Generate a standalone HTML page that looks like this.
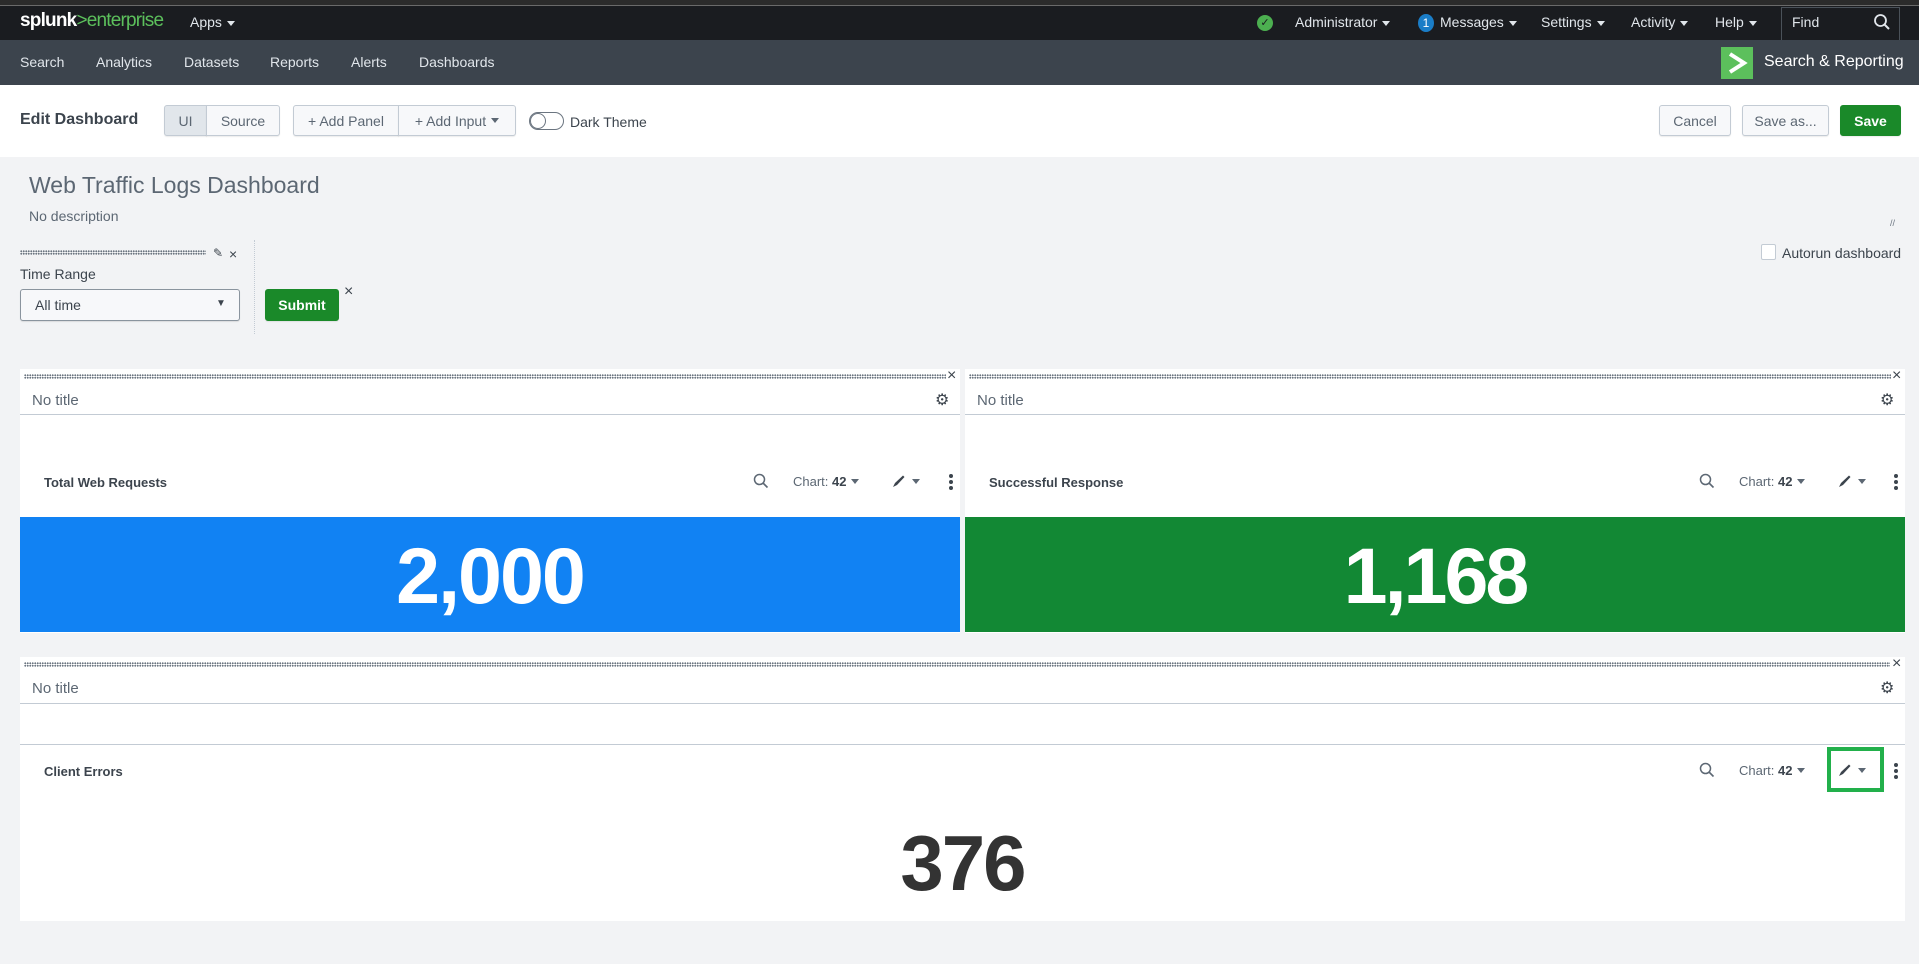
<!DOCTYPE html>
<html><head><meta charset="utf-8"><style>
*{margin:0;padding:0;box-sizing:border-box}
body{width:1919px;height:964px;overflow:hidden;background:#f2f3f5;font-family:"Liberation Sans",sans-serif;color:#3c444d;position:relative;font-size:14px}
.a{position:absolute;white-space:nowrap}
.tri{display:inline-block;width:0;height:0;border-left:4px solid transparent;border-right:4px solid transparent;border-top:5px solid currentColor;vertical-align:middle;margin-left:5px}
.btn{position:absolute;border:1px solid #c3cbd4;border-radius:3px;background:#f7f8fa;color:#5c6773;font-size:14px;display:flex;align-items:center;justify-content:center;box-shadow:0 1px 1px rgba(0,0,0,.08)}
.dots{position:absolute;height:5px;background-image:radial-gradient(circle,#6b7580 0.9px,transparent 1.1px);background-size:2.5px 2.5px}
.panel{position:absolute;background:#fff}
.nt{position:absolute;font-size:15px;color:#5c6773}
.ph{position:absolute;font-size:13px;font-weight:bold;color:#3c444d}
.tools{position:absolute;font-size:13px;color:#5c6773;display:flex;align-items:center}
</style></head><body>
<div class="a" style="left:0;top:0;width:1919px;height:5px;background:#2b2b2b"></div>
<div class="a" style="left:0;top:5px;width:1919px;height:1px;background:#6a6a6a"></div>
<div class="a" style="left:0;top:6px;width:1919px;height:34px;background:#1a1c20"></div>
<div class="a" style="left:20px;top:10px;font-size:19px;font-weight:bold;color:#fff;letter-spacing:-0.8px">splunk<span style="color:#5cc05c;font-weight:normal">&gt;enterprise</span></div>
<div class="a" style="left:190px;top:14px;color:#e1e6eb;font-size:14px">Apps<span class="tri"></span></div>
<div class="a" style="left:1257px;top:15px;width:16px;height:16px;border-radius:50%;background:#4caf50;color:#1a1c20;font-size:11px;text-align:center;line-height:16px">✓</div>
<div class="a" style="left:1295px;top:14px;color:#e1e6eb">Administrator<span class="tri"></span></div>
<div class="a" style="left:1418px;top:14px;width:16px;height:18px;border-radius:50%;background:#1a7dc7;color:#fff;font-size:12px;text-align:center;line-height:18px">1</div>
<div class="a" style="left:1440px;top:14px;color:#e1e6eb">Messages<span class="tri"></span></div>
<div class="a" style="left:1541px;top:14px;color:#e1e6eb">Settings<span class="tri"></span></div>
<div class="a" style="left:1631px;top:14px;color:#e1e6eb">Activity<span class="tri"></span></div>
<div class="a" style="left:1715px;top:14px;color:#e1e6eb">Help<span class="tri"></span></div>
<div class="a" style="left:1781px;top:7px;width:119px;height:34px;border:1px solid #4a5159;background:#1a1c20"></div>
<div class="a" style="left:1792px;top:14px;color:#e1e6eb">Find</div>
<svg class="a" style="left:1873px;top:13px" width="18" height="18" viewBox="0 0 18 18"><circle cx="7.5" cy="7.5" r="5.5" fill="none" stroke="#e1e6eb" stroke-width="1.8"/><path d="M11.5 11.5L16 16" stroke="#e1e6eb" stroke-width="2"/></svg>
<div class="a" style="left:0;top:40px;width:1919px;height:45px;background:#3c444d"></div>
<div class="a" style="left:20px;top:54px;color:#e1e6eb">Search</div>
<div class="a" style="left:96px;top:54px;color:#e1e6eb">Analytics</div>
<div class="a" style="left:184px;top:54px;color:#e1e6eb">Datasets</div>
<div class="a" style="left:270px;top:54px;color:#e1e6eb">Reports</div>
<div class="a" style="left:351px;top:54px;color:#e1e6eb">Alerts</div>
<div class="a" style="left:419px;top:54px;color:#e1e6eb">Dashboards</div>
<div class="a" style="left:1721px;top:47px;width:32px;height:32px;background:#5cc05c"></div>
<svg class="a" style="left:1721px;top:47px" width="32" height="32"><path d="M9 7L23 16L9 25" fill="none" stroke="#fff" stroke-width="4"/></svg>
<div class="a" style="left:1764px;top:53px;color:#fff;font-size:16px">Search &amp; Reporting</div>
<div class="a" style="left:0;top:85px;width:1919px;height:72px;background:#fff"></div>
<div class="a" style="left:20px;top:111px;font-size:16px;font-weight:bold;color:#3c444d">Edit Dashboard</div>
<div class="btn" style="left:164px;top:105px;width:43px;height:31px;background:#e1e6eb;border-radius:3px 0 0 3px">UI</div>
<div class="btn" style="left:206px;top:105px;width:74px;height:31px;border-radius:0 3px 3px 0">Source</div>
<div class="btn" style="left:293px;top:105px;width:106px;height:31px;border-radius:3px 0 0 3px">+ Add Panel</div>
<div class="btn" style="left:398px;top:105px;width:118px;height:31px;border-radius:0 3px 3px 0">+ Add Input<span class="tri"></span></div>
<div class="a" style="left:529px;top:112px;width:35px;height:18px;border:1px solid #6b7580;border-radius:10px"><div style="width:16px;height:16px;border-radius:50%;border:1px solid #6b7580;background:#fff"></div></div>
<div class="a" style="left:570px;top:114px;font-size:14px;color:#3c444d">Dark Theme</div>
<div class="btn" style="left:1659px;top:105px;width:72px;height:31px">Cancel</div>
<div class="btn" style="left:1742px;top:105px;width:87px;height:31px">Save as...</div>
<div class="btn" style="left:1840px;top:105px;width:61px;height:31px;background:#1a8929;border-color:#1a8929;color:#fff;font-weight:bold">Save</div>
<div class="a" style="left:29px;top:172px;font-size:23px;color:#5c6773">Web Traffic Logs Dashboard</div>
<div class="a" style="left:29px;top:208px;font-size:14px;color:#5c6773">No description</div>
<div class="a" style="left:1890px;top:218px;font-size:9px;color:#6b7580">//</div>
<div class="dots" style="left:20px;top:250px;width:186px"></div>
<div class="a" style="left:213px;top:246px;font-size:12px;color:#3c444d">✎</div>
<div class="a" style="left:229px;top:246px;font-size:14px;color:#3c444d">×</div>
<div class="a" style="left:20px;top:266px;font-size:14px;color:#3c444d">Time Range</div>
<div class="a" style="left:20px;top:289px;width:220px;height:32px;border:1px solid #8a949e;border-radius:3px;background:#f7f8fa;box-shadow:0 1px 1px rgba(0,0,0,.1)"></div>
<div class="a" style="left:35px;top:297px;color:#3c444d">All time</div>
<div class="a" style="left:216px;top:298px;color:#3c444d;font-size:10px">▼</div>
<div class="a" style="left:254px;top:240px;height:94px;border-left:1px dotted #c3cbd4"></div>
<div class="btn" style="left:265px;top:289px;width:74px;height:32px;background:#1a8929;border-color:#1a8929;color:#fff;font-weight:bold">Submit</div>
<div class="a" style="left:344px;top:283px;font-size:16px;color:#3c444d">×</div>
<div class="a" style="left:1761px;top:244px;width:15px;height:16px;border:1px solid #c3cbd4;border-radius:2px;background:#fff"></div>
<div class="a" style="left:1782px;top:245px;font-size:14px;color:#3c444d">Autorun dashboard</div>

<!-- panel 1 -->
<div class="panel" style="left:20px;top:369px;width:940px;height:264px"></div>
<div class="dots" style="left:24px;top:374px;width:922px"></div>
<div class="a" style="left:947px;top:367px;font-size:16px;color:#3c444d">×</div>
<div class="nt" style="left:32px;top:392px">No title</div>
<div class="a" style="left:935px;top:390px;font-size:16px;color:#3c444d">⚙</div>
<div class="a" style="left:20px;top:414px;width:940px;height:1px;background:#c3cbd4"></div>
<div class="ph" style="left:44px;top:475px">Total Web Requests</div>
<div class="tools" style="left:753px;top:473px"><svg width="16" height="16"><circle cx="6.5" cy="6.5" r="5" fill="none" stroke="#5c6773" stroke-width="1.5"/><path d="M10 10L14.5 14.5" stroke="#5c6773" stroke-width="1.6"/></svg><span style="margin-left:24px">Chart: <b style="color:#3c444d">42</b></span><span class="tri"></span>
<svg style="margin-left:32px" width="16" height="14"><path d="M2 13L4 9L12 1.5L13.5 3L6 11Z" fill="#3c444d"/></svg><span class="tri"></span></div>
<svg class="a" style="left:948px;top:473px" width="6" height="18"><circle cx="3" cy="3" r="2" fill="#3c444d"/><circle cx="3" cy="9" r="2" fill="#3c444d"/><circle cx="3" cy="15" r="2" fill="#3c444d"/></svg>
<div class="a" style="left:20px;top:517px;width:940px;height:115px;background:#1182f3"></div>
<div class="a" style="left:20px;top:530px;width:940px;text-align:center;font-size:79px;font-weight:bold;color:#fff;letter-spacing:-2px">2,000</div>

<!-- panel 2 -->
<div class="panel" style="left:965px;top:369px;width:940px;height:264px"></div>
<div class="dots" style="left:969px;top:374px;width:922px"></div>
<div class="a" style="left:1892px;top:367px;font-size:16px;color:#3c444d">×</div>
<div class="nt" style="left:977px;top:392px">No title</div>
<div class="a" style="left:1880px;top:390px;font-size:16px;color:#3c444d">⚙</div>
<div class="a" style="left:965px;top:414px;width:940px;height:1px;background:#c3cbd4"></div>
<div class="ph" style="left:989px;top:475px">Successful Response</div>
<div class="tools" style="left:1699px;top:473px"><svg width="16" height="16"><circle cx="6.5" cy="6.5" r="5" fill="none" stroke="#5c6773" stroke-width="1.5"/><path d="M10 10L14.5 14.5" stroke="#5c6773" stroke-width="1.6"/></svg><span style="margin-left:24px">Chart: <b style="color:#3c444d">42</b></span><span class="tri"></span>
<svg style="margin-left:32px" width="16" height="14"><path d="M2 13L4 9L12 1.5L13.5 3L6 11Z" fill="#3c444d"/></svg><span class="tri"></span></div>
<svg class="a" style="left:1893px;top:473px" width="6" height="18"><circle cx="3" cy="3" r="2" fill="#3c444d"/><circle cx="3" cy="9" r="2" fill="#3c444d"/><circle cx="3" cy="15" r="2" fill="#3c444d"/></svg>
<div class="a" style="left:965px;top:517px;width:940px;height:115px;background:#128834"></div>
<div class="a" style="left:965px;top:530px;width:940px;text-align:center;font-size:79px;font-weight:bold;color:#fff;letter-spacing:-3px">1,168</div>

<!-- panel 3 -->
<div class="panel" style="left:20px;top:657px;width:1885px;height:264px"></div>
<div class="dots" style="left:24px;top:662px;width:1866px"></div>
<div class="a" style="left:1892px;top:655px;font-size:16px;color:#3c444d">×</div>
<div class="nt" style="left:32px;top:680px">No title</div>
<div class="a" style="left:1880px;top:678px;font-size:16px;color:#3c444d">⚙</div>
<div class="a" style="left:20px;top:703px;width:1885px;height:1px;background:#c3cbd4"></div>
<div class="a" style="left:20px;top:744px;width:1885px;height:1px;background:#c3cbd4"></div>
<div class="ph" style="left:44px;top:764px">Client Errors</div>
<div class="tools" style="left:1699px;top:762px"><svg width="16" height="16"><circle cx="6.5" cy="6.5" r="5" fill="none" stroke="#5c6773" stroke-width="1.5"/><path d="M10 10L14.5 14.5" stroke="#5c6773" stroke-width="1.6"/></svg><span style="margin-left:24px">Chart: <b style="color:#3c444d">42</b></span><span class="tri"></span>
<svg style="margin-left:32px" width="16" height="14"><path d="M2 13L4 9L12 1.5L13.5 3L6 11Z" fill="#3c444d"/></svg><span class="tri"></span></div>
<svg class="a" style="left:1893px;top:762px" width="6" height="18"><circle cx="3" cy="3" r="2" fill="#3c444d"/><circle cx="3" cy="9" r="2" fill="#3c444d"/><circle cx="3" cy="15" r="2" fill="#3c444d"/></svg>
<div class="a" style="left:1827px;top:747px;width:57px;height:45px;border:4px solid #22b04b"></div>
<div class="a" style="left:20px;top:818px;width:1885px;text-align:center;font-size:78px;font-weight:bold;color:#333;letter-spacing:-2px">376</div>
</body></html>
